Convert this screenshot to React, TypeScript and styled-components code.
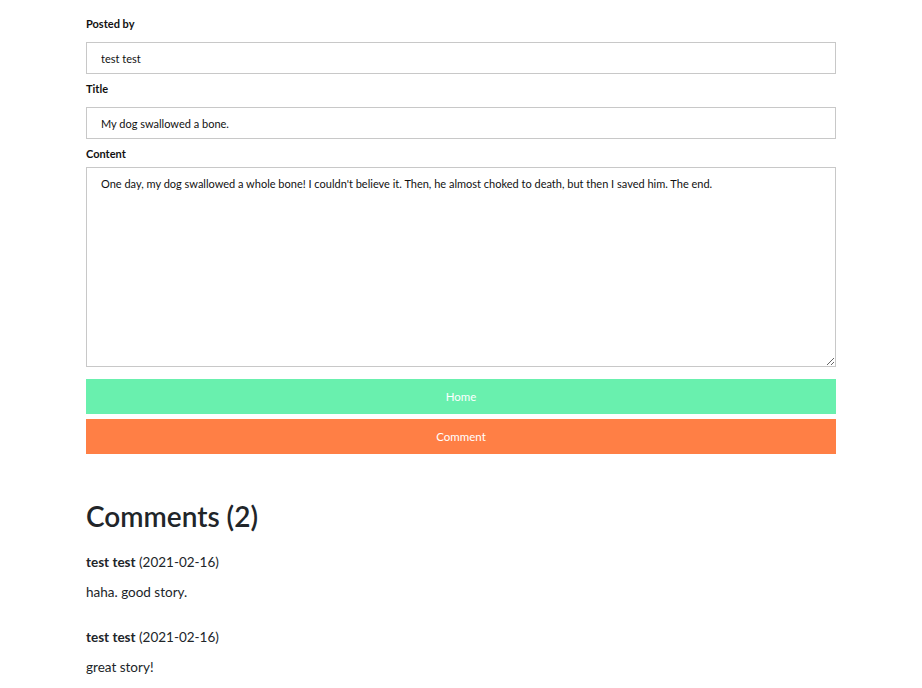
import React from "react";
import styled, { createGlobalStyle } from "styled-components";

const Global = createGlobalStyle`
  html, body { margin: 0; padding: 0; background: #fff; }
  body { font-family: Lato, "Open Sans", sans-serif; color: #212529; }
`;

const Page = styled.div`
  width: 750px;
  margin: 0 auto;
  padding-top: 16px;
`;

const Form = styled.form`
  display: flex;
  flex-direction: column;
`;

const Label = styled.label`
  display: block;
  font-size: 11px;
  line-height: 15px;
  font-weight: 700;
  color: #111;
  margin-bottom: 11px;
`;

const Input = styled.input`
  box-sizing: border-box;
  width: 100%;
  height: 32px;
  margin: 0 0 7px;
  padding: 0 14px;
  border: 1px solid #c8c8c8;
  font-family: inherit;
  font-size: 11px;
  color: #111;
  outline: none;
`;

const TextArea = styled.textarea`
  box-sizing: border-box;
  width: 100%;
  height: 200px;
  margin: -5px 0 12px;
  padding: 8px 14px;
  border: 1px solid #c8c8c8;
  font-family: inherit;
  font-size: 11px;
  line-height: 16px;
  color: #111;
  outline: none;
  display: block;
`;

const Button = styled.button<{ $bg: string }>`
  display: block;
  width: 100%;
  height: 35px;
  margin: 0 0 5px;
  border: none;
  background: ${(p) => p.$bg};
  color: #fff;
  font-family: inherit;
  font-size: 11.5px;
  cursor: pointer;
`;

const CommentsSection = styled.section`
  margin-top: 40px;
`;

const Heading = styled.h3`
  margin: 0 0 19px;
  font-size: 28px;
  line-height: 34px;
  font-weight: 600;
  color: #212529;
`;

const CommentItem = styled.div`
  margin-bottom: 25px;
`;

const Meta = styled.p`
  margin: 0 0 10px;
  font-size: 13.5px;
  line-height: 20px;
`;

const Author = styled.b`
  font-weight: 700;
`;

const Body = styled.p`
  margin: 0;
  font-size: 13.5px;
  line-height: 20px;
`;

const comments = [
  { author: "test test", date: "2021-02-16", text: "haha. good story." },
  { author: "test test", date: "2021-02-16", text: "great story!" },
];

export default function App() {
  return (
    <>
      <Global />
      <Page>
        <Form onSubmit={(e) => e.preventDefault()}>
          <Label>Posted by</Label>
          <Input defaultValue="test test" />
          <Label>Title</Label>
          <Input defaultValue="My dog swallowed a bone." />
          <Label>Content</Label>
          <TextArea defaultValue="One day, my dog swallowed a whole bone! I couldn't believe it. Then, he almost choked to death, but then I saved him. The end." />
          <Button type="button" $bg="#69f0ae">Home</Button>
          <Button type="button" $bg="#ff7f45">Comment</Button>
        </Form>
        <CommentsSection>
          <Heading>Comments (2)</Heading>
          {comments.map((c, i) => (
            <CommentItem key={i}>
              <Meta>
                <Author>{c.author}</Author> ({c.date})
              </Meta>
              <Body>{c.text}</Body>
            </CommentItem>
          ))}
        </CommentsSection>
      </Page>
    </>
  );
}
